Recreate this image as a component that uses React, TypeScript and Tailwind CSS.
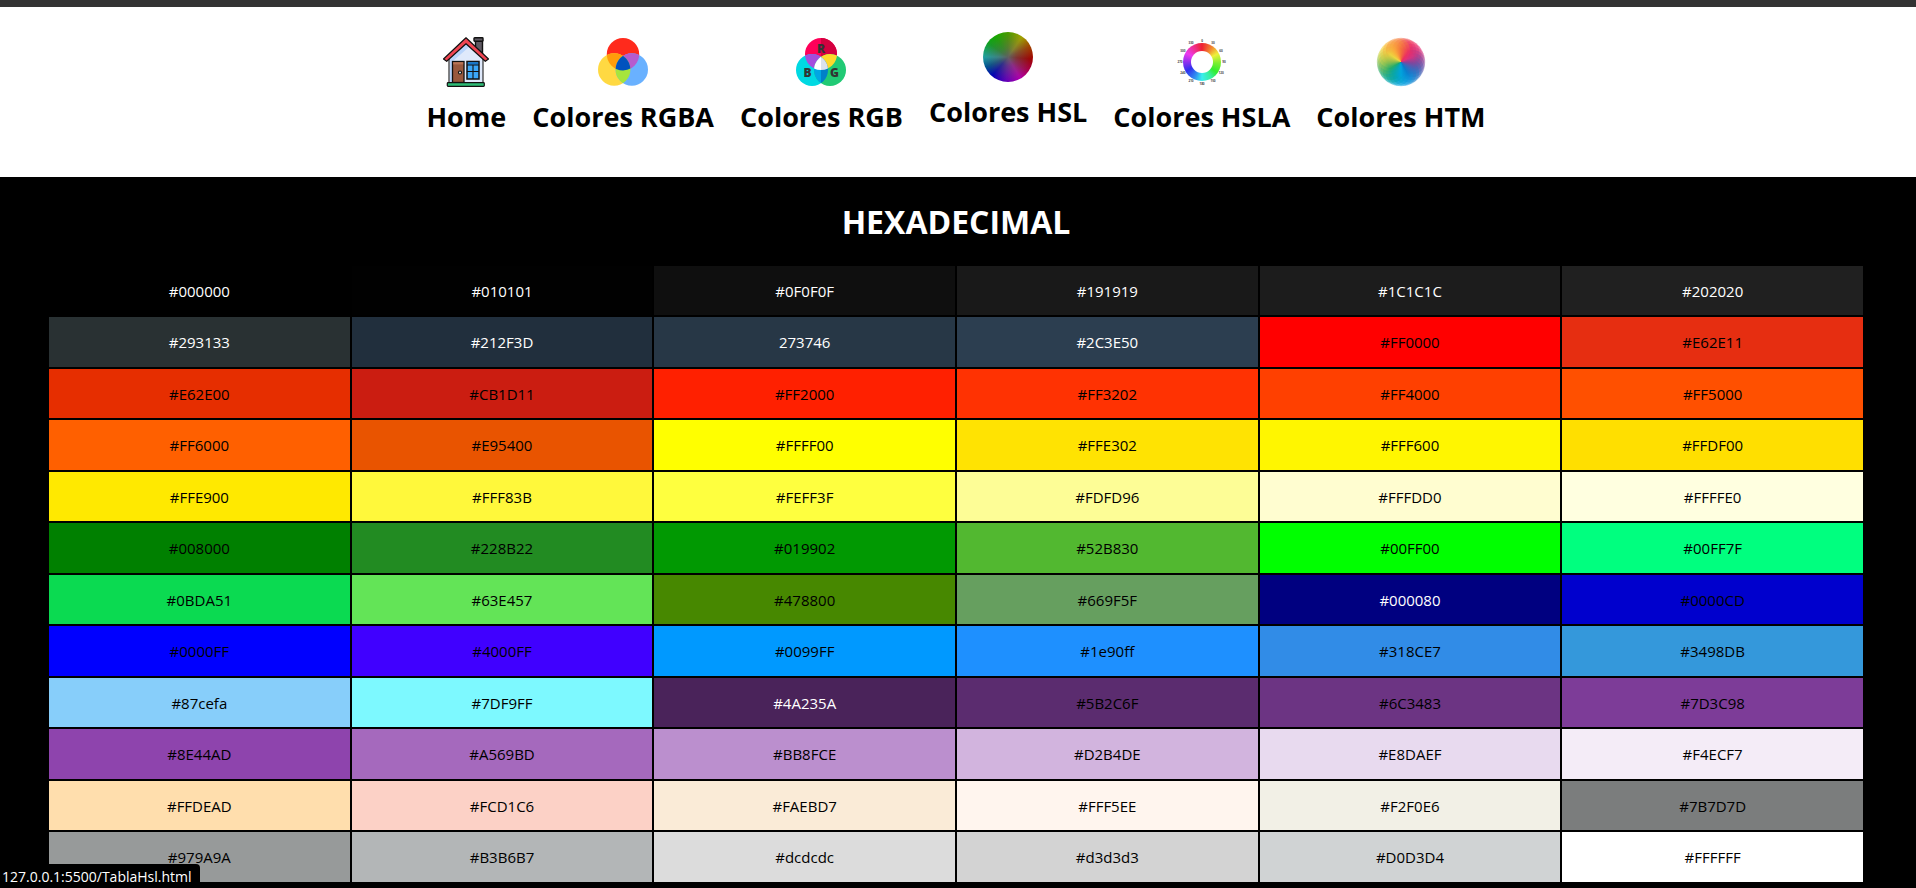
import type { ReactNode } from "react";

function HomeIcon() {
  return (
    <svg viewBox="0 0 50 50" className="size-[50px]" aria-hidden="true">
      <path d="M34.500 3.500h7v13l-7-6z" fill="#5f5a63" stroke="#111" strokeWidth="1.400" />
      <rect x="33" y="0.700" width="9" height="3.600" rx="0.700" fill="#5f5a63" stroke="#111" strokeWidth="1.400" />
      <path d="M8 20 25 6l17 14v26H8z" fill="#dfe9fb" stroke="#333" strokeWidth="1.200" />
      <path d="M9 46V22L25 7l3 3-16 14v22z" fill="#b9d4fb" />
      <rect x="11.500" y="24.500" width="11.500" height="21" fill="#99583d" stroke="#111" strokeWidth="1.300" />
      <rect x="12.200" y="25.200" width="10" height="2.200" fill="#b87456" />
      <circle cx="19" cy="35.500" r="1.500" fill="#fff" stroke="#111" strokeWidth="1.200" />
      <rect x="26" y="24.500" width="12" height="17.500" fill="#3ba7f8" stroke="#111" strokeWidth="1.500" />
      <rect x="27" y="25.500" width="10" height="2" fill="#1474ca" />
      <path d="M26 28h12M26 34.500h12M32 28v14" stroke="#111" strokeWidth="1.100" />
      <path d="M2.500 22 25 0.800 47.500 22l-3.200 2.300L25 6.800 5.700 24.300z" fill="#f04552" stroke="#111" strokeWidth="1.200" strokeLinejoin="round" />
      <rect x="6.300" y="45.700" width="37" height="3.700" rx="0.800" fill="#2ebc76" stroke="#111" strokeWidth="1.200" />
    </svg>
  );
}

function RgbaIcon() {
  return (
    <svg viewBox="0 0 50 50" className="size-[50px]" aria-hidden="true">
      <defs>
        <clipPath id="rgba-top"><circle cx="25" cy="17.200" r="16.200" /></clipPath>
        <clipPath id="rgba-left"><circle cx="16.200" cy="32.500" r="16.200" /></clipPath>
      </defs>
      <circle cx="25" cy="17.200" r="16.200" fill="#ff2a1c" />
      <circle cx="16.200" cy="32.500" r="16.200" fill="#ffd942" />
      <circle cx="33.800" cy="32.500" r="16.200" fill="#69b1ff" />
      <g clipPath="url(#rgba-top)">
        <circle cx="16.200" cy="32.500" r="16.200" fill="#ff9d0a" />
        <circle cx="33.800" cy="32.500" r="16.200" fill="#b55bce" />
      </g>
      <g clipPath="url(#rgba-left)">
        <circle cx="33.800" cy="32.500" r="16.200" fill="#a6e53d" />
        <g clipPath="url(#rgba-top)">
          <circle cx="33.800" cy="32.500" r="16.200" fill="#0052be" />
        </g>
      </g>
    </svg>
  );
}

function RgbIcon() {
  return (
    <svg viewBox="0 0 50 50" className="size-[50px]" aria-hidden="true">
      <defs>
        <clipPath id="rgb-top"><circle cx="25" cy="17" r="16" /></clipPath>
        <clipPath id="rgb-left"><circle cx="16" cy="33" r="16" /></clipPath>
        <clipPath id="rgb-right"><circle cx="34" cy="33" r="16" /></clipPath>
      </defs>
      <circle cx="25" cy="17" r="16" fill="#ff0059" />
      <path d="M25 1a16 16 0 0 1 0 32z" fill="#d4003f" />
      <circle cx="16" cy="33" r="16" fill="#00d9e2" />
      <circle cx="34" cy="33" r="16" fill="#21ca75" />
      <g clipPath="url(#rgb-top)">
        <circle cx="16" cy="33" r="16" fill="#a44dde" />
        <circle cx="34" cy="33" r="16" fill="#ffd82b" />
      </g>
      <g clipPath="url(#rgb-left)">
        <g clipPath="url(#rgb-right)">
          <path d="M0 0h25v50H0z" fill="#00a7e4" />
          <path d="M25 0h25v50H25z" fill="#0080c8" />
          <g clipPath="url(#rgb-top)">
            <path d="M0 0h25v50H0z" fill="#fff" />
            <path d="M25 0h25v50H25z" fill="#dbe2ec" />
          </g>
        </g>
      </g>
      <g className="font-['Open_Sans',sans-serif] text-[12px] font-extrabold" fill="#333" textAnchor="middle">
        <text x="25" y="16">R</text>
        <text x="11.500" y="40">B</text>
        <text x="38.500" y="40">G</text>
      </g>
    </svg>
  );
}

function HslIcon() {
  return (
    <span
      aria-hidden="true"
      className="block size-[50px] rounded-full bg-[radial-gradient(circle,#606060_0%,#60606080_25%,transparent_68%),conic-gradient(#4a9a00,#a0a000_35deg,#a04000_65deg,#a00000_95deg,#a80050_125deg,#b000a8_150deg,#6000b8_185deg,#0000b4_220deg,#005090_245deg,#20a0a0_270deg,#10a020_305deg,#18a800_330deg,#4a9a00)]"
    />
  );
}

const degrees = [0, 30, 60, 90, 120, 150, 180, 210, 240, 270, 300, 330];

function HslaIcon() {
  return (
    <span aria-hidden="true" className="relative grid size-[50px] place-items-center">
      <span className="grid size-[38px] place-items-center rounded-full bg-[conic-gradient(#ee2233,#f28a30_35deg,#eef03a_62deg,#7aee30_95deg,#30ee30_125deg,#38eea0_150deg,#38eeee_180deg,#3090f0_205deg,#3030ee_240deg,#9030ee_270deg,#ee38ee_300deg,#ee3090_330deg,#ee2233)]">
        <span className="size-[22px] rounded-full bg-white" />
      </span>
      <svg viewBox="0 0 50 50" className="absolute inset-0 size-[50px] overflow-visible">
        <g className="font-['Open_Sans',sans-serif] text-[3px]" fill="#444" textAnchor="middle">
          {degrees.map((d) => (
            <text
              key={d}
              x={25 + 22 * Math.sin((d * Math.PI) / 180)}
              y={26 - 21.5 * Math.cos((d * Math.PI) / 180)}
            >
              {d}
            </text>
          ))}
        </g>
      </svg>
    </span>
  );
}

const petals = [
  "#f26a3c", "#f04a4a", "#ee3058", "#ee2a66", "#e62e78", "#c83a88",
  "#8f3f97", "#6a4aa5", "#4a5fb5", "#2a6fc0", "#0a7fcc", "#0090dc",
  "#00a4e8", "#00a6d8", "#00a4bc", "#00a494", "#10a870", "#40b060",
  "#80bc50", "#b4cc48", "#ecdc40", "#fccc3c", "#fcac3a", "#f88a3a",
];

function HtmlIcon() {
  return (
    <span aria-hidden="true" className="grid size-[50px] place-items-center">
      <svg viewBox="0 0 50 50" className="col-start-1 row-start-1 size-[50px]">
        {petals.map((fill, i) => (
          <circle key={fill} cx="25" cy="12.800" r="12" fill={fill} opacity="0.400" transform={`rotate(${i * 15} 25 25)`} />
        ))}
      </svg>
      <span className="col-start-1 row-start-1 size-[44px] rounded-full bg-[conic-gradient(#f26a3c,#ee2a60_35deg,#e62e78_65deg,#8f3f97_95deg,#4a5fb5_120deg,#0a78cc_150deg,#00a4e8_180deg,#00a4a8_220deg,#10a870_240deg,#80bc50_270deg,#ecdc40_305deg,#fcac3a_330deg,#f26a3c)] mask-[radial-gradient(circle_closest-side,#000_0%,#000c_60%,transparent_100%)]" />
    </span>
  );
}

const links: { label: string; href: string; icon: ReactNode; place: string }[] = [
  { label: "Home", href: "#home", icon: <HomeIcon />, place: "pt-[30px]" },
  { label: "Colores RGBA", href: "#rgba", icon: <RgbaIcon />, place: "pt-[30px]" },
  { label: "Colores RGB", href: "#rgb", icon: <RgbIcon />, place: "pt-[30px]" },
  { label: "Colores HSL", href: "#hsl", icon: <HslIcon />, place: "pt-[25px]" },
  { label: "Colores HSLA", href: "#hsla", icon: <HslaIcon />, place: "pt-[30px]" },
  { label: "Colores HTM", href: "#html", icon: <HtmlIcon />, place: "pt-[30px]" },
];

const rows: [string, string][][] = [
  [["#000000", "bg-[#000000] text-white"], ["#010101", "bg-[#010101] text-white"], ["#0F0F0F", "bg-[#0F0F0F] text-white"], ["#191919", "bg-[#191919] text-white"], ["#1C1C1C", "bg-[#1C1C1C] text-white"], ["#202020", "bg-[#202020] text-white"]],
  [["#293133", "bg-[#293133] text-white"], ["#212F3D", "bg-[#212F3D] text-white"], ["273746", "bg-[#273746] text-white"], ["#2C3E50", "bg-[#2C3E50] text-white"], ["#FF0000", "bg-[#FF0000]"], ["#E62E11", "bg-[#E62E11]"]],
  [["#E62E00", "bg-[#E62E00]"], ["#CB1D11", "bg-[#CB1D11]"], ["#FF2000", "bg-[#FF2000]"], ["#FF3202", "bg-[#FF3202]"], ["#FF4000", "bg-[#FF4000]"], ["#FF5000", "bg-[#FF5000]"]],
  [["#FF6000", "bg-[#FF6000]"], ["#E95400", "bg-[#E95400]"], ["#FFFF00", "bg-[#FFFF00]"], ["#FFE302", "bg-[#FFE302]"], ["#FFF600", "bg-[#FFF600]"], ["#FFDF00", "bg-[#FFDF00]"]],
  [["#FFE900", "bg-[#FFE900]"], ["#FFF83B", "bg-[#FFF83B]"], ["#FEFF3F", "bg-[#FEFF3F]"], ["#FDFD96", "bg-[#FDFD96]"], ["#FFFDD0", "bg-[#FFFDD0]"], ["#FFFFE0", "bg-[#FFFFE0]"]],
  [["#008000", "bg-[#008000]"], ["#228B22", "bg-[#228B22]"], ["#019902", "bg-[#019902]"], ["#52B830", "bg-[#52B830]"], ["#00FF00", "bg-[#00FF00]"], ["#00FF7F", "bg-[#00FF7F]"]],
  [["#0BDA51", "bg-[#0BDA51]"], ["#63E457", "bg-[#63E457]"], ["#478800", "bg-[#478800]"], ["#669F5F", "bg-[#669F5F]"], ["#000080", "bg-[#000080] text-white"], ["#0000CD", "bg-[#0000CD]"]],
  [["#0000FF", "bg-[#0000FF]"], ["#4000FF", "bg-[#4000FF]"], ["#0099FF", "bg-[#0099FF]"], ["#1e90ff", "bg-[#1e90ff]"], ["#318CE7", "bg-[#318CE7]"], ["#3498DB", "bg-[#3498DB]"]],
  [["#87cefa", "bg-[#87cefa]"], ["#7DF9FF", "bg-[#7DF9FF]"], ["#4A235A", "bg-[#4A235A] text-white"], ["#5B2C6F", "bg-[#5B2C6F]"], ["#6C3483", "bg-[#6C3483]"], ["#7D3C98", "bg-[#7D3C98]"]],
  [["#8E44AD", "bg-[#8E44AD]"], ["#A569BD", "bg-[#A569BD]"], ["#BB8FCE", "bg-[#BB8FCE]"], ["#D2B4DE", "bg-[#D2B4DE]"], ["#E8DAEF", "bg-[#E8DAEF]"], ["#F4ECF7", "bg-[#F4ECF7]"]],
  [["#FFDEAD", "bg-[#FFDEAD]"], ["#FCD1C6", "bg-[#FCD1C6]"], ["#FAEBD7", "bg-[#FAEBD7]"], ["#FFF5EE", "bg-[#FFF5EE]"], ["#F2F0E6", "bg-[#F2F0E6]"], ["#7B7D7D", "bg-[#7B7D7D]"]],
  [["#979A9A", "bg-[#979A9A]"], ["#B3B6B7", "bg-[#B3B6B7]"], ["#dcdcdc", "bg-[#dcdcdc]"], ["#d3d3d3", "bg-[#d3d3d3]"], ["#D0D3D4", "bg-[#D0D3D4]"], ["#FFFFFF", "bg-[#FFFFFF]"]],
];

export default function App() {
  return (
    <div className="min-h-screen bg-black font-['Open_Sans','Noto_Sans',sans-serif]">
      <header className="border-t-[7px] border-[#333333] bg-white pr-1 pb-[42px]">
        <nav aria-label="Colores" className="flex items-start justify-center gap-[26px]">
          {links.map(({ label, href, icon, place }) => (
            <a key={label} href={href} className={`flex flex-col items-center gap-3 text-[27px] leading-9 font-bold text-black ${place}`}>
              {icon}
              <span className="whitespace-nowrap">{label}</span>
            </a>
          ))}
        </nav>
      </header>
      <main className="pt-[22px] pr-[51px] pb-1 pl-[47px]">
        <h1 id="hex-title" className="text-center text-[32px] leading-[45px] font-bold text-white">HEXADECIMAL</h1>
        <table aria-labelledby="hex-title" className="mt-5 w-full table-fixed border-separate border-spacing-[2px] text-center text-[15px] leading-5 text-black">
          <tbody>
            {rows.map((row, i) => (
              <tr key={i} className="h-[49px] even:h-[50px]">
                {row.map(([label, tone]) => (
                  <td key={label} className={`p-0 ${tone}`}>{label}</td>
                ))}
              </tr>
            ))}
          </tbody>
        </table>
      </main>
      <div role="status" className="fixed bottom-0 left-0 h-6 rounded-tr bg-black pr-2 pl-0.5 text-[14px] leading-[26px] text-white">
        127.0.0.1:5500/TablaHsl.html
      </div>
    </div>
  );
}
